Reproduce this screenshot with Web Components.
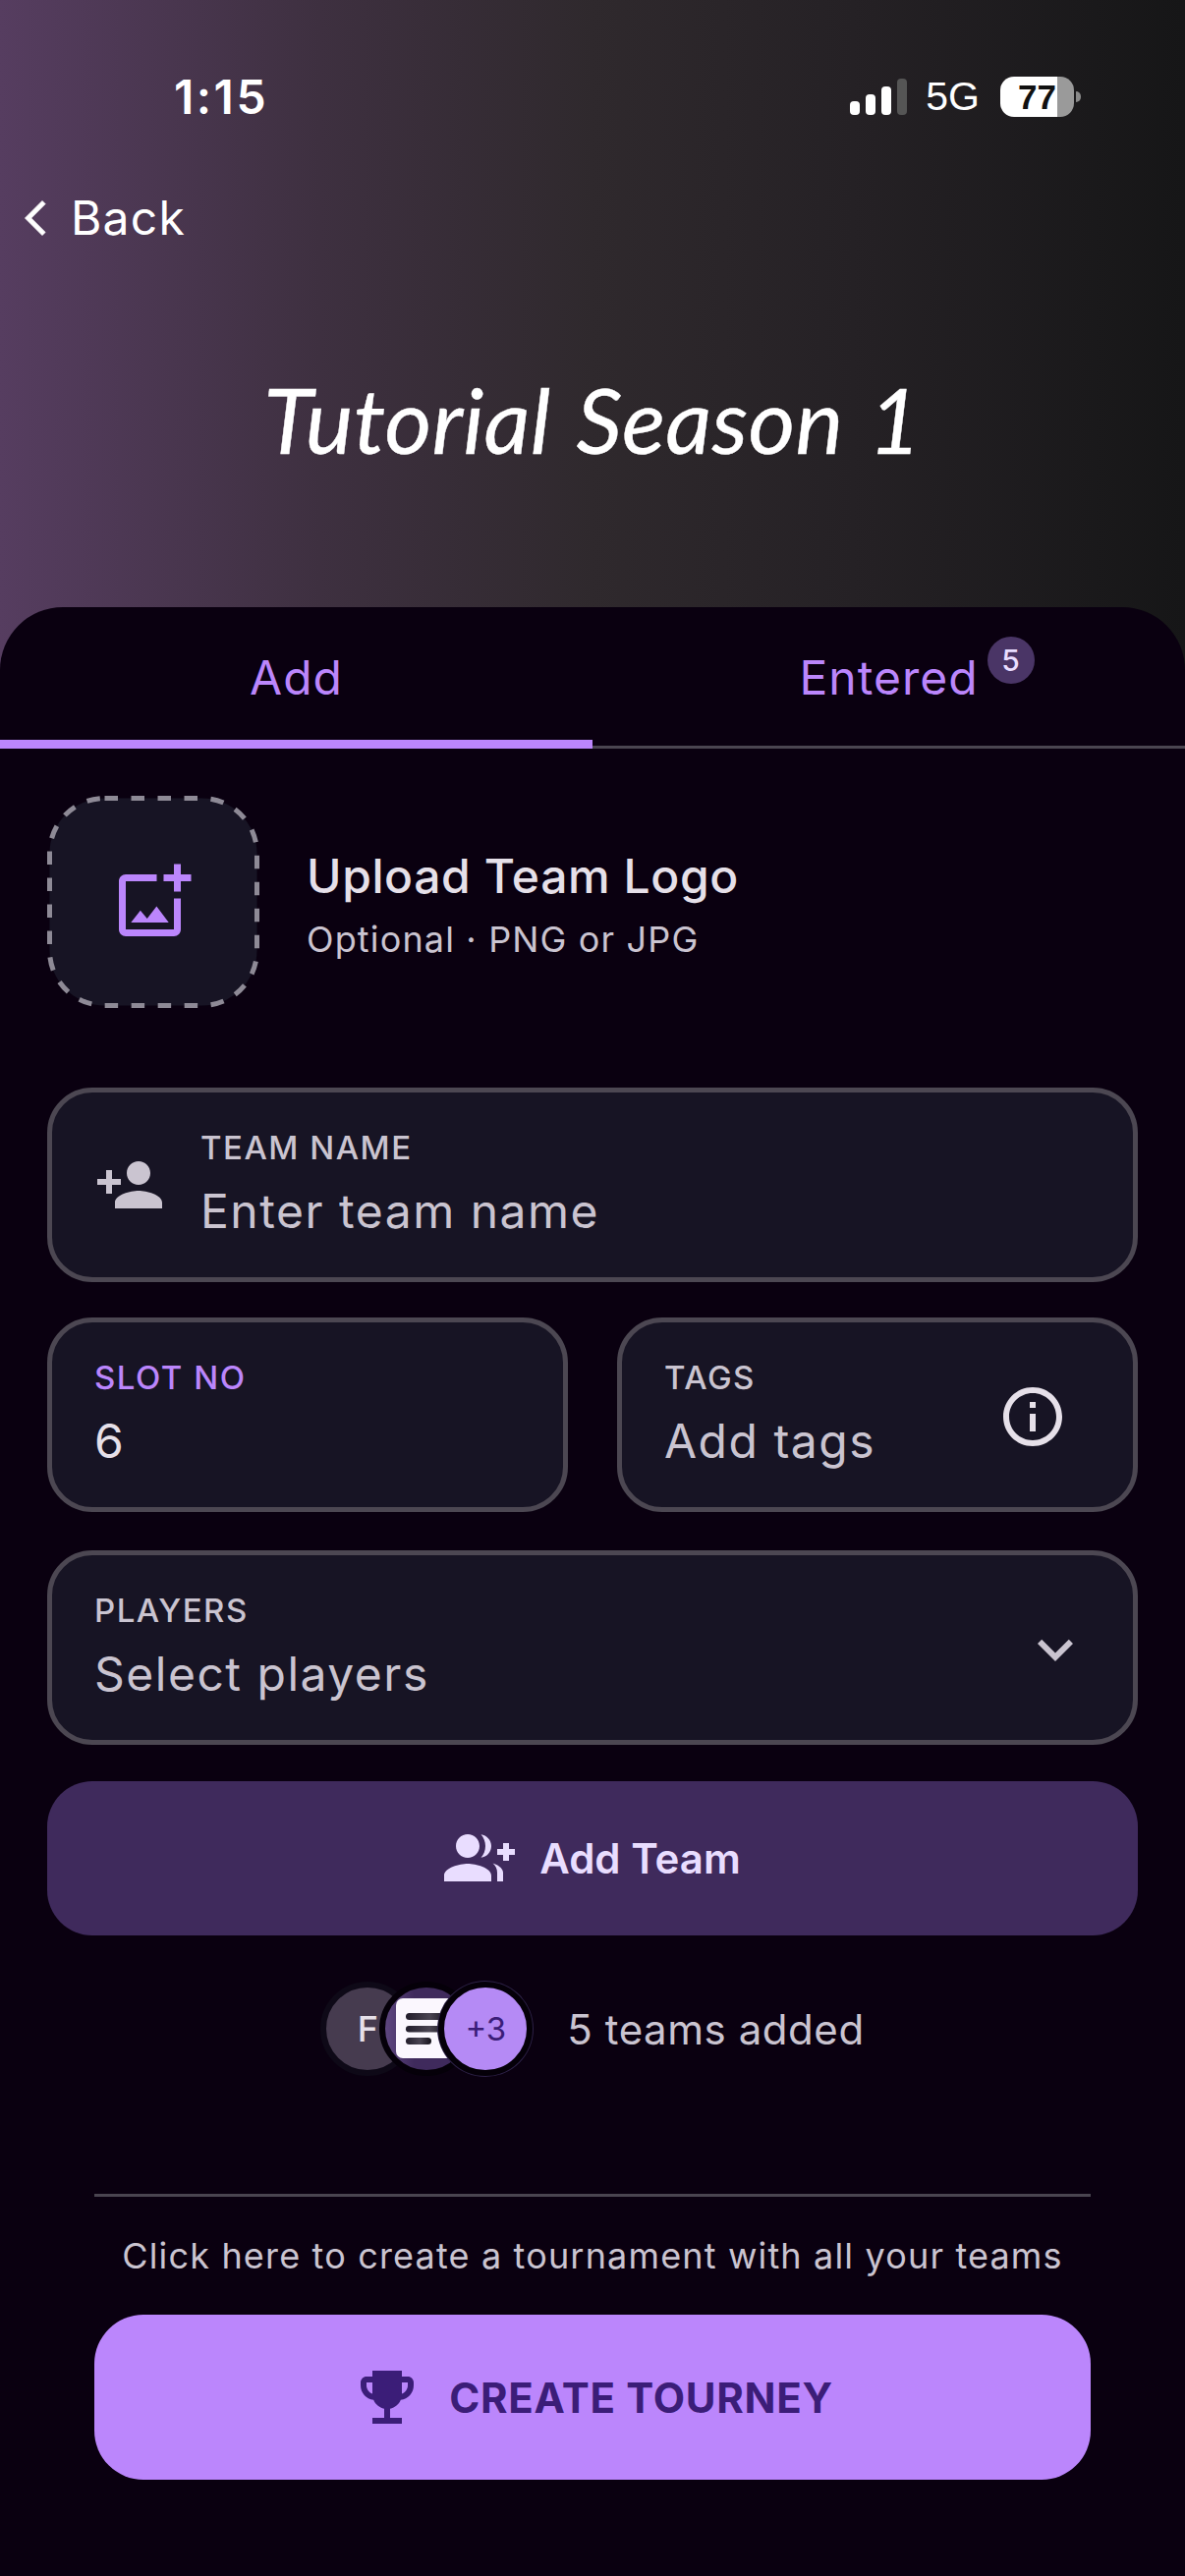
<!DOCTYPE html>
<html>
<head>
<meta charset="utf-8">
<title>Tutorial Season 1</title>
<style>
  html, body { margin: 0; padding: 0; background: #0a0010; }
  body { width: 1206px; height: 2622px; overflow: hidden; font-family: Inter, "Liberation Sans", sans-serif; }
</style>
</head>
<body>
<app-screen>
  <app-header title="Tutorial Season 1"></app-header>
  <tab-bar active="Add" other="Entered" count="5"></tab-bar>
  <logo-upload></logo-upload>
  <form-field class="wide" label="TEAM NAME" value="Enter team name" icon="person"></form-field>
  <div class="pair">
    <form-field label="SLOT NO" value="6" accent></form-field>
    <form-field label="TAGS" value="Add tags" trailing="info"></form-field>
  </div>
  <form-field label="PLAYERS" value="Select players" trailing="chevron"></form-field>
  <add-button>Add Team</add-button>
  <team-stack>5 teams added</team-stack>
  <tourney-footer></tourney-footer>
</app-screen>

<script>
const ICONS = {
  person: 'M15 12c2.21 0 4-1.79 4-4s-1.79-4-4-4-4 1.79-4 4 1.79 4 4 4zm-9-2V7H4v3H1v2h3v3h2v-3h3v-2H6zm9 4c-2.67 0-8 1.34-8 4v2h16v-2c0-2.66-5.33-4-8-4z',
  info: 'M11 7h2v2h-2zm0 4h2v6h-2zm1-9C6.48 2 2 6.48 2 12s4.48 10 10 10 10-4.48 10-10S17.52 2 12 2zm0 18c-4.41 0-8-3.59-8-8s3.59-8 8-8 8 3.59 8 8-3.59 8-8 8z',
  chevron: 'M7.41 8.59L12 13.17l4.59-4.58L18 10l-6 6-6-6 1.41-1.41z',
  back: 'M17.77 3.77L16 2 6 12l10 10 1.77-1.77L9.54 12z',
  image: 'M18 20H4V6h9V4H4c-1.1 0-2 .9-2 2v14c0 1.1.9 2 2 2h14c1.1 0 2-.9 2-2v-9h-2v9zm-7.79-3.17l-1.96-2.36L5.5 18h11l-3.54-4.71zM20 4V1h-2v3h-3c.01.01 0 2 0 2h3v2.99c.01.01 2 0 2 0V6h3V4h-3z',
  group: 'M22 9V7h-2v2h-2v2h2v2h2v-2h2V9h-2zM8 12c2.21 0 4-1.79 4-4s-1.79-4-4-4-4 1.79-4 4 1.79 4 4 4zm0 2c-2.67 0-8 1.34-8 4v2h16v-2c0-2.66-5.33-4-8-4zM12.51 4.05C13.43 5.11 14 6.49 14 8s-.57 2.89-1.49 3.95C14.47 11.7 16 10.04 16 8s-1.53-3.7-3.49-3.95zM16.53 13.83c.89.83 1.47 1.87 1.47 3.17v3h2v-3c0-1.45-1.59-2.51-3.47-3.17z',
  trophy: 'M19 5h-2V3H7v2H5c-1.1 0-2 .9-2 2v1c0 2.55 1.92 4.63 4.39 4.94.63 1.5 1.98 2.63 3.61 2.96V19H7v2h10v-2h-4v-3.1c1.63-.33 2.98-1.46 3.61-2.96C19.08 12.63 21 10.55 21 8V7c0-1.1-.9-2-2-2zM5 8V7h2v3.82C5.84 10.4 5 9.3 5 8zm14 0c0 1.3-.84 2.4-2 2.82V7h2v1z'
};

function icon(name, size, color) {
  return `<svg width="${size}" height="${size}" viewBox="0 0 24 24" fill="${color}" style="display:block;flex:none"><path d="${ICONS[name]}"/></svg>`;
}

class AppScreen extends HTMLElement {
  constructor() {
    super();
    this.attachShadow({mode: 'open'}).innerHTML = `<style>
      :host { display: block; width: 1206px; height: 2622px; }
      .sheet { height: 2004px; margin-top: -64px; border-radius: 64px 64px 0 0; background: #0a0010; }
      .form { padding: 48px 48px 0; display: flex; flex-direction: column; gap: 37.5px; }
      ::slotted(.pair) { display: grid; grid-template-columns: 530px 530px; gap: 50px; margin: -1.5px 0 1.5px; }
      ::slotted(logo-upload) { margin-bottom: 43.5px; }
    </style>
    <slot name="head"></slot>
    <div class="sheet">
      <slot name="tabs"></slot>
      <div class="form"><slot></slot></div>
    </div>`;
  }
  connectedCallback() {
    this.querySelector('app-header').slot = 'head';
    this.querySelector('tab-bar').slot = 'tabs';
  }
}

class AppHeader extends HTMLElement {
  connectedCallback() {
    const root = this.attachShadow({mode: 'open'});
    root.innerHTML = `<style>
      :host { display: block; height: 682px; color: #fff; overflow: hidden;
        background: linear-gradient(90deg, #563d60 0%, #3e3040 27%, #2f292d 50%, #252125 72%, #161617 100%); }
      .status { display: flex; align-items: center; height: 52px; padding: 72px 106px 0 177px; }
      .time { font: 600 48px Inter, sans-serif; flex: 1; letter-spacing: 2.5px; }
      .signal { display: flex; align-items: flex-end; gap: 6px; height: 37px; margin-right: 19px; }
      .signal i { width: 10px; border-radius: 4px; background: #fff; }
      .net { font: 400 41px "Liberation Sans", sans-serif; margin-right: 21px; }
      .batt { display: flex; align-items: center; gap: 2px; }
      .cell { width: 75px; height: 41px; border-radius: 14px; overflow: hidden; color: #111; text-align: center;
        font: 700 35px/41px "Liberation Sans", sans-serif; background: linear-gradient(90deg, #fff 77%, #9a9a9a 77%); }
      .nub { width: 5px; height: 11px; background: #8a8a8a; border-radius: 0 5px 5px 0; }
      .back { display: flex; align-items: center; gap: 15px; padding: 77px 0 0 15px; font-size: 48px; letter-spacing: 1.2px; line-height: 42px; font-weight: 400; }
      .back svg path { stroke: #fff; stroke-width: .5; }
      h1 { margin: 134px 0 0; text-align: center; font: italic 400 92px/100px Lato, sans-serif; letter-spacing: .2px; word-spacing: 4px; -webkit-text-stroke: .4px #fff; }
    </style>
    <div class="status">
      <span class="time">1:15</span>
      <span class="signal"><i style="height:14px"></i><i style="height:21px"></i><i style="height:29px"></i><i style="height:37px;background:#555"></i></span>
      <span class="net">5G</span>
      <span class="batt"><span class="cell">77</span><span class="nub"></span></span>
    </div>
    <div class="back">${icon('back', 42, '#fff')}<span>Back</span></div>
    <h1>${this.getAttribute('title')}</h1>`;
  }
}

class TabBar extends HTMLElement {
  connectedCallback() {
    const root = this.attachShadow({mode: 'open'});
    root.innerHTML = `<style>
      :host { display: flex; height: 144px; font-size: 48px; letter-spacing: 1px; color: #bb86fc; }
      .tab { flex: 1; display: flex; justify-content: center; box-sizing: border-box; padding-top: 44px; line-height: 56px; }
      .on { border-bottom: 9px solid #bb86fc; }
      .off { border-bottom: 3px solid #4a4550; }
      .wrap { position: relative; }
      .badge { position: absolute; left: 100%; top: -14px; margin-left: 9px; width: 48px; height: 48px; border-radius: 50%;
        background: #4a3566; color: #e9ddff; font-size: 30px; font-weight: 500; line-height: 48px; text-align: center; letter-spacing: 0; }
    </style>
    <div class="tab on"><span>${this.getAttribute('active')}</span></div>
    <div class="tab off"><span class="wrap">${this.getAttribute('other')}<span class="badge">${this.getAttribute('count')}</span></span></div>`;
  }
}

class LogoUpload extends HTMLElement {
  connectedCallback() {
    const root = this.attachShadow({mode: 'open'});
    root.innerHTML = `<style>
      :host { display: flex; align-items: center; gap: 48px; }
      svg { display: block; flex: none; }
      .copy { padding-top: 5px; }
      .title { font-size: 48px; font-weight: 500; line-height: 56px; color: #e6e0e9; letter-spacing: .6px; }
      .sub { margin-top: 14px; font-size: 36px; line-height: 44px; color: #cac4d0; letter-spacing: 1.15px; }
    </style>
    <svg width="216" height="216" viewBox="0 0 216 216">
      <rect x="2.5" y="2.5" width="211" height="211" rx="56" fill="#171424" stroke="#8e8a96" stroke-width="5" stroke-dasharray="13.5 13.5"/>
      <g transform="translate(66 66) scale(3.5)" fill="#bb86fc"><path d="${ICONS.image}"/></g>
    </svg>
    <div class="copy">
      <div class="title">Upload Team Logo</div>
      <div class="sub">Optional · PNG or JPG</div>
    </div>`;
  }
}

class FormField extends HTMLElement {
  connectedCallback() {
    const root = this.attachShadow({mode: 'open'});
    const lead = this.getAttribute('icon');
    const trail = this.getAttribute('trailing');
    const accent = this.hasAttribute('accent');
    root.innerHTML = `<style>
      :host { display: flex; align-items: center; box-sizing: border-box; height: 198px;
        padding: 0 43px; border: 5px solid #4c4752; border-radius: 46px; background: #171424; }
      :host([trailing="info"]) { padding-right: 66px; }
      .lead { margin-right: 36px; }
      .text { flex: 1; padding-bottom: 1px; }
      .label { font-size: 33px; font-weight: 500; line-height: 40px; letter-spacing: 1.5px; color: ${accent ? '#bb86fc' : '#cac4d0'}; }
      .value { margin-top: 15px; font-size: 48px; line-height: 60px; letter-spacing: 1.5px; color: ${accent ? '#e6e0e9' : '#cac4d0'}; }
      .trail { padding-top: 3px; }
    </style>
    ${lead ? `<span class="lead">${icon(lead, 72, '#cac4d0')}</span>` : ''}
    <div class="text"><div class="label">${this.getAttribute('label')}</div><div class="value">${this.getAttribute('value')}</div></div>
    ${trail ? `<span class="trail">${icon(trail, 72, trail === 'info' ? '#e6e0e9' : '#cac4d0')}</span>` : ''}`;
  }
}

class AddButton extends HTMLElement {
  connectedCallback() {
    const root = this.attachShadow({mode: 'open'});
    root.innerHTML = `<style>
      :host { display: flex; align-items: center; justify-content: center; gap: 25px; height: 156.5px; margin-top: -.5px;
        border-radius: 46px; background: #3f2a5c; color: #e9ddff; font-size: 42px; font-weight: 600; }
    </style>${icon('group', 72, '#e9ddff')}<span><slot></slot></span>`;
  }
}

class TeamStack extends HTMLElement {
  connectedCallback() {
    const root = this.attachShadow({mode: 'open'});
    root.innerHTML = `<style>
      :host { display: flex; align-items: center; justify-content: center; gap: 35px; margin-top: 10px; color: #cac4d0; font-size: 42px; letter-spacing: .55px; }
      .stack { display: flex; }
      .av { flex: none; width: 84px; height: 84px; border: 6px solid #050009; border-radius: 50%; overflow: hidden;
        display: flex; align-items: center; justify-content: center; letter-spacing: 0; }
      .av + .av { margin-left: -36px; }
      .f { background: #463b4f; color: #e6e0e9; font-size: 36px; font-weight: 500; border-color: #0e0917; }
      .logo { background: linear-gradient(90deg, #5e4680 0%, #3f2a5c 35%); }
      .logo svg { display: block; }
      .more { background: #b58af5; color: #3b1d78; font-size: 33px; box-shadow: 0 0 0 1px #2e2148; }
    </style>
    <div class="stack">
      <div class="av f">F</div>
      <div class="av logo"><svg width="84" height="84" viewBox="0 0 84 84">
        <defs><linearGradient id="bar"><stop offset="0" stop-color="#221d2b"/><stop offset=".55" stop-color="#4a4452"/><stop offset="1" stop-color="#14111a"/></linearGradient></defs>
        <rect x="11" y="11" width="66" height="61" rx="7" fill="#fbf7fe"/>
        <rect x="21" y="26" width="44" height="7" rx="3.5" fill="url(#bar)"/>
        <rect x="21" y="39" width="44" height="6.5" rx="3.2" fill="url(#bar)"/>
        <rect x="21" y="51" width="26" height="7" rx="3.5" fill="url(#bar)"/>
      </svg></div>
      <div class="av more">+3</div>
    </div>
    <span><slot></slot></span>`;
  }
}

class TourneyFooter extends HTMLElement {
  connectedCallback() {
    const root = this.attachShadow({mode: 'open'});
    root.innerHTML = `<style>
      :host { display: block; margin: 82.5px 48px 0; }
      hr { margin: 0; border: 0; height: 3px; background: #4a4550; }
      p { margin: 36px 0 36px; text-align: center; font-size: 36px; line-height: 48px; color: #cac4d0; letter-spacing: 1.16px; }
      .btn { display: flex; align-items: center; justify-content: center; gap: 27px; height: 168px; border-radius: 50px;
        background: #bb86fc; color: #3b1d78; font-size: 42px; font-weight: 700; letter-spacing: .7px; }
    </style>
    <hr>
    <p>Click here to create a tournament with all your teams</p>
    <div class="btn">${icon('trophy', 72, '#3b1d78')}<span>CREATE TOURNEY</span></div>`;
  }
}

customElements.define('app-screen', AppScreen);
customElements.define('app-header', AppHeader);
customElements.define('tab-bar', TabBar);
customElements.define('logo-upload', LogoUpload);
customElements.define('form-field', FormField);
customElements.define('add-button', AddButton);
customElements.define('team-stack', TeamStack);
customElements.define('tourney-footer', TourneyFooter);
</script>
</body>
</html>
